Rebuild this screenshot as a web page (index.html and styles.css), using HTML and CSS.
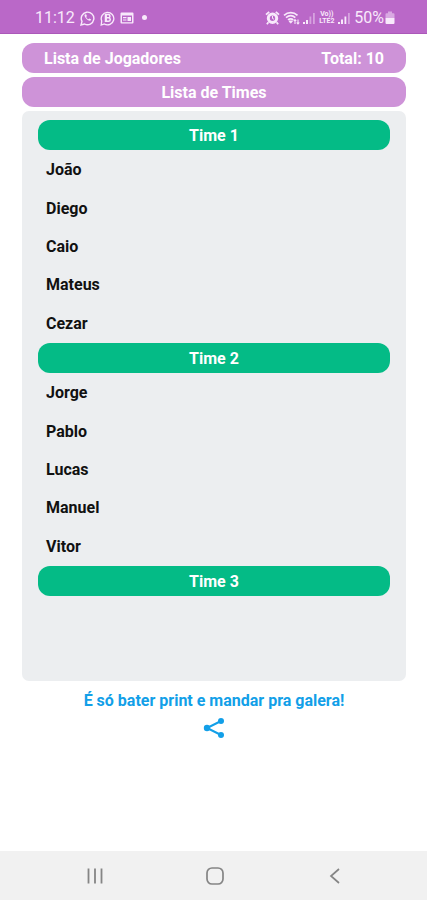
FILE: index.html
```html
<!DOCTYPE html>
<html lang="pt-BR">
<head>
<meta charset="utf-8">
<meta name="viewport" content="width=device-width, initial-scale=1">
<title>Lista de Times</title>
<link rel="stylesheet" href="styles.css">
</head>
<body>
<header class="status">
  <div class="status-group">
    <span>11:12</span>
    <svg width="15" height="16" viewBox="0 0 15 16" fill="none" stroke="currentColor" stroke-width="1.400"><path d="M1 15l1-3.600A6.300 6.300 0 1 1 4.600 14z"/><path d="M4.700 4.500c-1.100 1.700 3.300 7 5.600 6.200l.9-1.300-1.800-1-.9.900c-.9-.3-1.900-1.300-2.300-2.300l.7-.9-.8-1.800z" fill="currentColor" stroke="none"/></svg>
    <svg width="15" height="16" viewBox="0 0 15 16" fill="none" stroke="currentColor" stroke-width="1.300"><path d="M1.200 15l.5-4A6.300 6.300 0 1 1 4.300 14z"/><path d="M5.500 4.500h2.800a1.600 1.600 0 0 1 0 3.300H5.500h3a1.700 1.700 0 0 1 0 3.500h-3zM6.200 4.500v6.800" stroke-width="1.500"/></svg>
    <svg width="14" height="16" viewBox="0 0 14 16" fill="currentColor"><path fill-rule="evenodd" d="M1.500 2.500h11a1 1 0 0 1 1 1v9a1 1 0 0 1-1 1h-11a1 1 0 0 1-1-1v-9a1 1 0 0 1 1-1zM2 5.500v6.700h10V5.500z"/><path d="M7.500 7H11v4H7.500zM3 7h3.500v1.200H3zM3 9.500h3.500v1H3z"/></svg>
    <span class="status-dot"></span>
  </div>
  <div class="status-group status-right">
    <svg width="15" height="16" viewBox="0 0 15 16" fill="currentColor"><path fill-rule="evenodd" d="M7.500 2.500a5.700 5.700 0 1 1 0 11.400 5.700 5.700 0 0 1 0-11.400zM7.500 5.500a2.700 2.700 0 1 0 0 5.400 2.700 2.700 0 0 0 0-5.400z"/><path d="M1 4.700l3.200-2.900M14 4.700l-3.200-2.900M3.400 12.200l-1.500 2M11.600 12.200l1.500 2" fill="none" stroke="currentColor" stroke-width="1.800"/><path d="M7.500 6v2.500l1.500.7" fill="none" stroke="currentColor"/></svg>
    <svg width="17" height="16" viewBox="0 0 17 16" fill="none" stroke="currentColor"><path d="M1 5.300c4-3.500 9.500-3.500 13.500 0M3 7.600c3-2.500 6.500-2.500 9.300 0M5 9.900c1.800-1.500 3.600-1.500 5.300 0" stroke-width="1.700"/><path d="M6 11l1.700 2.200L9.400 11z" fill="currentColor"/><path d="M12 14V9.500M10.700 11L12 9.500l1.300 1.500M15 9.500V14M13.700 12.500L15 14l1.300-1.500" stroke-width="1.100"/></svg>
    <svg width="12" height="16" viewBox="0 0 12 16" fill="currentColor"><path d="M0 12h2v2H0zM3 10h2v4H3z"/><path d="M6.500 6.500h1.800V14H6.500zM10 3h1.800v11H10z" opacity=".45"/></svg>
    <span class="network"><span>Vo))</span><span>LTE2</span></span>
    <svg width="12" height="16" viewBox="0 0 12 16" fill="currentColor"><path d="M0 12h2v2H0zM3 9.500h2V14H3zM6.500 6.500h1.800V14H6.500z"/><path d="M10 3h1.800v11H10z" opacity=".45"/></svg>
    <span class="battery"><span>50%</span>
    <svg width="10" height="16" viewBox="0 0 10 16" fill="currentColor"><path d="M3 1.500h4v1.800h1.500a1 1 0 0 1 1 1V8h-9V4.300a1 1 0 0 1 1-1H3z" opacity=".5"/><path d="M.5 8h9v5a1 1 0 0 1-1 1h-7a1 1 0 0 1-1-1z"/></svg></span>
  </div>
</header>
<main class="content">
  <div class="bar bar-split"><span>Lista de Jogadores</span><span>Total: 10</span></div>
  <h1 class="bar">Lista de Times</h1>
  <section class="teams">
    <h2 class="team-name">Time 1</h2>
    <ul class="players"><li>João</li><li>Diego</li><li>Caio</li><li>Mateus</li><li>Cezar</li></ul>
    <h2 class="team-name">Time 2</h2>
    <ul class="players"><li>Jorge</li><li>Pablo</li><li>Lucas</li><li>Manuel</li><li>Vitor</li></ul>
    <h2 class="team-name">Time 3</h2>
  </section>
  <p class="hint">É só bater print e mandar pra galera!</p>
  <button class="share" type="button" aria-label="Compartilhar">
    <svg width="22" height="22" viewBox="0 0 22 22" fill="currentColor"><path d="M18 4L4 11l14 7" fill="none" stroke="currentColor" stroke-width="2"/><circle cx="18" cy="4" r="3"/><circle cx="4" cy="11" r="3.200"/><circle cx="18" cy="18" r="3"/></svg>
  </button>
</main>
<nav class="system-nav">
  <button type="button" aria-label="Recentes"><svg width="18" height="18" viewBox="0 0 18 18" fill="none" stroke="currentColor" stroke-width="1.800"><path d="M2.500 1.500v15M9 1.500v15M15.500 1.500v15"/></svg></button>
  <button type="button" aria-label="Início"><svg width="18" height="18" viewBox="0 0 18 18" fill="none" stroke="currentColor" stroke-width="1.700"><rect x="1" y="1" width="16" height="16" rx="5"/></svg></button>
  <button type="button" aria-label="Voltar"><svg width="18" height="18" viewBox="0 0 18 18" fill="none" stroke="currentColor" stroke-width="1.700"><path d="M13 2L5 9l8 7"/></svg></button>
</nav>
</body>
</html>
```
FILE: styles.css
```css
* {
  box-sizing: border-box;
}

body {
  margin: 0;
  min-height: 100vh;
  display: flex;
  flex-direction: column;
  background: #fff;
  color: #111;
  font: 16px/20px Roboto, sans-serif;
}

svg {
  display: block;
  flex: none;
}

button {
  border: 0;
  padding: 0;
  background: none;
  color: inherit;
  cursor: pointer;
}

.status {
  display: flex;
  justify-content: space-between;
  align-items: center;
  height: 34px;
  padding: 2px 32px 0 35px;
  background: #ba68c8;
  border-bottom: 1px solid #ab58b9;
  color: #f8e9fb;
}

.status-group {
  display: flex;
  align-items: center;
  gap: 5px;
}

.status-right {
  gap: 3px;
}

.status-dot {
  width: 5px;
  height: 5px;
  margin-left: 3px;
  border-radius: 50%;
  background: currentColor;
}

.network {
  display: flex;
  flex-direction: column;
  align-items: center;
  width: 17px;
  font-size: 7px;
  line-height: 7px;
  font-weight: 700;
}

.battery {
  display: flex;
  align-items: center;
  gap: 1px;
  margin-left: 1px;
}

.content {
  flex: 1;
  display: flex;
  flex-direction: column;
  padding: 9px 21px 0 22px;
}

.bar,
.team-name {
  margin: 0;
  padding: 6px 22px 4px;
  border-radius: 12px;
  color: #fff;
  font-size: 16px;
  line-height: 20px;
  font-weight: 700;
  text-align: center;
}

.bar {
  margin-bottom: 4px;
  background: #ce93d8;
}

.bar-split {
  display: flex;
  justify-content: space-between;
}

.teams {
  min-height: 570px;
  padding: 9px 16px;
  border-radius: 7px;
  background: #eceef0;
}

.team-name {
  background: #04bb86;
}

.players {
  display: flex;
  flex-direction: column;
  height: 193px;
  margin: 0;
  padding: 1px 8px 0;
  list-style: none;
  font-weight: 700;
}

.players li {
  flex: 1;
  display: flex;
  align-items: center;
}

.hint {
  margin: 10px 0 6px;
  color: #129fe8;
  font-weight: 700;
  text-align: center;
}

.share {
  align-self: center;
  color: #129fe8;
}

.system-nav {
  display: flex;
  justify-content: center;
  gap: 102px;
  padding: 16px 0 15px 2px;
  background: #f1f1f1;
  color: #858585;
}
```
